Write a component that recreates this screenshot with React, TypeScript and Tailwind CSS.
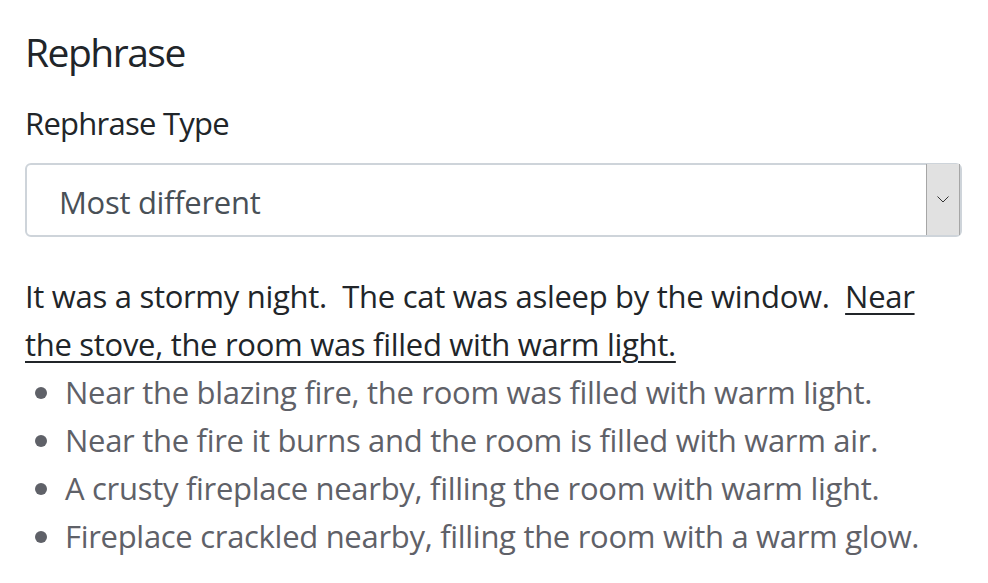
const options = [
  "Near the blazing fire, the room was filled with warm light.",
  "Near the fire it burns and the room is filled with warm air.",
  "A crusty fireplace nearby, filling the room with warm light.",
  "Fireplace crackled nearby, filling the room with a warm glow.",
];

export default function App() {
  return (
    <div className="min-h-screen bg-white pl-[25px] pr-[26px] pt-[28px] font-['Open_Sans',sans-serif] tracking-[-0.3px] text-[#212529]">
      <h5 className="text-[39px] leading-[48px] font-normal tracking-[-1.5px]">Rephrase</h5>

      <label className="mt-[23px] block text-[31px] leading-[48px] tracking-[-0.75px]">Rephrase Type</label>

      <div className="relative mt-[16px] flex h-[74px] items-center rounded-[6px] border-2 border-[#ced4da] bg-white">
        <span className="pl-[32px] pt-[4px] text-[31px] text-[#495057]">Most different</span>
        {/* native-looking dropdown button */}
        <div className="absolute right-0 top-[-1px] bottom-0 flex w-[34px] items-center justify-center border-x border-[#a6a6a6] bg-[#e1e1e1]">
          <svg width="12" height="7" viewBox="0 0 12 7" fill="none">
            <polyline points="0.5,0.5 6,6 11.5,0.5" stroke="#333" strokeWidth="1" />
          </svg>
        </div>
      </div>

      <p className="mt-[35px] text-[31px] leading-[48px]">
        It was a stormy night.&nbsp; The cat was asleep by the window.&nbsp;{" "}
        <span className="underline decoration-[2px] underline-offset-[5px]">
          Near the stove, the room was filled with warm light.
        </span>
      </p>

      <ul className="text-[31px] leading-[48px] text-[#5f6168]">
        {options.map((o) => (
          <li key={o} className="flex items-center">
            <span className="ml-[10px] mr-[18px] mt-[2px] h-[12px] w-[12px] shrink-0 rounded-full bg-[#5f6168]" />
            <span>{o}</span>
          </li>
        ))}
      </ul>
    </div>
  );
}
